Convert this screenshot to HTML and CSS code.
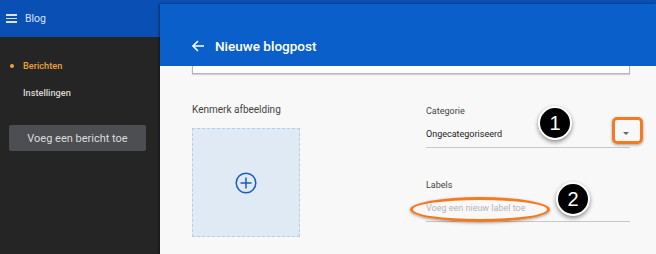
FILE: index.html
```html
<!DOCTYPE html>
<html lang="nl">
<head>
    <meta charset="UTF-8">
    <meta name="viewport" content="width=device-width, initial-scale=1.0">
    <title>Nieuwe blogpost</title>
    <link rel="stylesheet" href="styles.css">
</head>
<body>
<div class="app">
    <div class="topbar">
        <span class="menu-icon"><span></span><span></span><span></span></span>
        <span class="app-title">Blog</span>
    </div>
    <div class="sidebar">
        <a class="nav-item active" href="#">Berichten</a>
        <a class="nav-item" href="#">Instellingen</a>
        <button class="add-button">Voeg een bericht toe</button>
    </div>

    <!-- editor ligt over de app heen -->
    <div class="panel">
        <div class="panel-header">
            <svg class="back-icon" width="14" height="14" viewBox="0 0 14 14">
                <path d="M13 7H2M7 2L2 7l5 5" fill="none" stroke="#fff" stroke-width="1.6"/>
            </svg>
            <span class="panel-title">Nieuwe blogpost</span>
        </div>
        <div class="panel-body">
            <div class="card-end"></div>
            <div class="columns">
                <div class="col-image">
                    <div class="field-label">Kenmerk afbeelding</div>
                    <div class="image-drop">
                        <svg width="22" height="22" viewBox="0 0 22 22">
                            <circle cx="11" cy="11" r="9.8" fill="none" stroke="#1a5cc0" stroke-width="1.5"/>
                            <path d="M11 5.5v11M5.5 11h11" stroke="#1a5cc0" stroke-width="1.5"/>
                        </svg>
                    </div>
                </div>
                <div class="col-meta">
                    <div class="field">
                        <div class="field-label small">Categorie</div>
                        <div class="select">
                            <span>Ongecategoriseerd</span>
                            <span class="caret"></span>
                            <span class="mark-box"></span>
                            <span class="badge badge-one">1</span>
                        </div>
                    </div>
                    <div class="field">
                        <div class="field-label small">Labels</div>
                        <div class="select">
                            <span class="placeholder">Voeg een nieuw label toe</span>
                            <span class="mark-ellipse"></span>
                            <span class="badge badge-two">2</span>
                        </div>
                    </div>
                </div>
            </div>
        </div>
    </div>
</div>
</body>
</html>
```

FILE: styles.css
```css
body {
    margin: 0;
    font-family: Roboto, "Liberation Sans", sans-serif;
    background-color: #252525;
}
.app {
    position: relative;
    width: 656px;
    height: 254px;
    overflow: hidden;
}
.topbar {
    height: 37px;
    background-color: #0a4fb4;
    display: flex;
    align-items: center;
    padding-left: 6px;
}
.menu-icon {
    display: flex;
    flex-direction: column;
    gap: 2px;
    width: 11px;
    margin-right: 8px;
}
.menu-icon span {
    height: 1.5px;
    background-color: #d6e4ff;
}
.app-title {
    color: #d6e4ff;
    font-size: 10.5px;
}
.sidebar {
    width: 160px;
    padding-top: 22px;
}
.nav-item {
    display: block;
    position: relative;
    padding-left: 23px;
    height: 27px;
    line-height: 14px;
    font-size: 9.2px;
    font-weight: 500;
    color: #d8d8d8;
    text-decoration: none;
}
.nav-item.active {
    color: #eea23c;
}
.nav-item.active::before {
    content: "";
    position: absolute;
    left: 10px;
    top: 5px;
    width: 4px;
    height: 4px;
    border-radius: 50%;
    background-color: #eea23c;
}
.add-button {
    margin: 12px 0 0 9px;
    width: 137px;
    height: 26px;
    border: none;
    border-radius: 2px;
    background-color: #4c4e52;
    color: #dcdcdc;
    font-family: inherit;
    font-size: 11px;
}
.panel {
    position: absolute;
    left: 160px;
    top: 4px;
    right: 0;
    bottom: 0;
    background-color: #f8f8f8;
    box-shadow: -1px 0 2px rgba(0, 0, 0, 0.5);
}
.panel-header {
    height: 62px;
    background-color: #0b5fca;
    display: flex;
    align-items: center;
    padding-left: 31px;
    padding-top: 21px;
    box-sizing: border-box;
}
.back-icon {
    margin-right: 10px;
}
.panel-title {
    color: #fff;
    font-size: 13.5px;
    font-weight: 500;
}
.card-end {
    margin-left: 32px;
    width: 436px;
    height: 7px;
    background-color: #fff;
    border: 1px solid #b5b5b5;
    border-top: none;
    box-shadow: 0 1px 1px rgba(0, 0, 0, 0.15);
}
.columns {
    display: flex;
    padding-left: 32px;
    padding-top: 29px;
}
.col-image {
    width: 234px;
}
.field-label {
    font-size: 10px;
    color: #444;
    height: 14px;
    line-height: 14px;
}
.field-label.small {
    font-size: 9px;
}
.image-drop {
    margin-top: 11px;
    width: 106px;
    height: 107px;
    background-color: #e0eaf5;
    border: 1px dashed #b4cde9;
    display: flex;
    align-items: center;
    justify-content: center;
}
.col-meta {
    width: 204px;
    padding-top: 1px;
}
.field {
    margin-bottom: 30px;
}
.select {
    position: relative;
    margin-top: 9px;
    height: 20px;
    border-bottom: 1px solid #c8c8c8;
    font-size: 9px;
    line-height: 14px;
    color: #222;
}
.placeholder {
    color: #b4b4b4;
}
.caret {
    position: absolute;
    right: 1px;
    top: 5px;
    border-left: 3px solid transparent;
    border-right: 3px solid transparent;
    border-top: 3px solid #666;
}
.mark-box {
    position: absolute;
    left: 186px;
    top: -10px;
    width: 25px;
    height: 21px;
    border: 3px solid #f47a22;
    border-radius: 5px;
    box-shadow: 0 1px 3px rgba(0, 0, 0, 0.35);
}
.mark-ellipse {
    position: absolute;
    left: -16px;
    top: -4px;
    width: 134px;
    height: 19px;
    border: 3px solid #f47a22;
    border-radius: 50%;
    box-shadow: 0 1px 3px rgba(0, 0, 0, 0.35);
}
.badge {
    position: absolute;
    width: 30px;
    height: 30px;
    border-radius: 50%;
    background-color: #000;
    border: 2.5px solid #fff;
    box-shadow: 0 2px 4px rgba(0, 0, 0, 0.45);
    color: #fff;
    font-family: "Liberation Sans", sans-serif;
    font-size: 20px;
    line-height: 30px;
    text-align: center;
}
.badge-one {
    left: 112px;
    top: -21px;
}
.badge-two {
    left: 130px;
    top: -19px;
}
```
